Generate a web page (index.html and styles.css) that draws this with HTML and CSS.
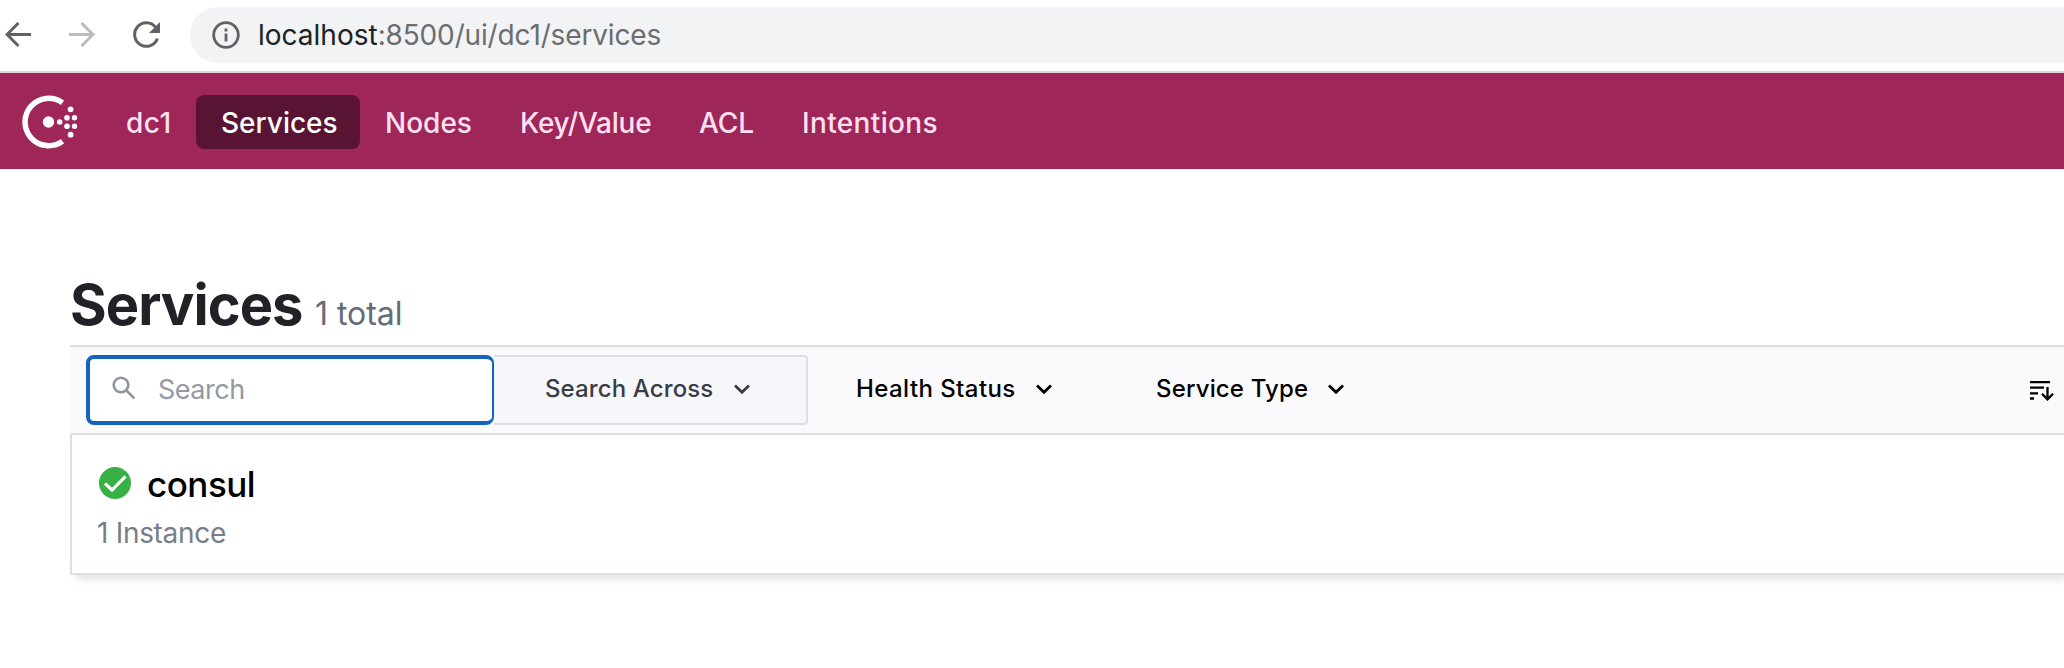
FILE: index.html
```html
<!DOCTYPE html>
<html lang="en">
<head>
<meta charset="utf-8">
<title>Services - Consul</title>
<link rel="stylesheet" href="styles.css">
</head>
<body>
<div class="toolbar">
  <svg class="tool back" viewBox="0 0 26 26"><path d="M26 12.5H2M13.5 1 2 12.5 13.5 24"/></svg>
  <svg class="tool forward" viewBox="0 0 26 26"><path d="M0 12.5h24M12.500 1 24 12.500 12.500 24"/></svg>
  <svg class="reload" viewBox="0 0 28 28"><path class="arc" d="M22.600 6.400A11.700 11.700 0 1 0 24.400 17.400"/><path class="tip" d="M27 1v11H16z"/></svg>
  <div class="address">
    <svg class="info" viewBox="0 0 28 28"><circle cx="14" cy="14" r="12.300"/><path d="M14 12.500v8M14 7.500v3"/></svg>
    <span class="url"><b>localhost</b>:8500/ui/dc1/services</span>
  </div>
</div>
<header class="header">
  <svg class="logo" viewBox="0 0 56 54"><path d="M40.500 7.700A23.700 23.700 0 1 0 40.500 46.300"/><g><circle cx="26.500" cy="27" r="5.700"/><circle cx="37.700" cy="27" r="2.800"/><circle cx="45" cy="22.700" r="2.800"/><circle cx="45" cy="31.300" r="2.800"/><circle cx="52.500" cy="22.700" r="2.700"/><circle cx="52.500" cy="31.300" r="2.700"/><circle cx="48.600" cy="14.300" r="2.900"/><circle cx="48.600" cy="39.700" r="2.900"/></g></svg>
  <nav class="nav">
    <a class="item dc">dc1</a>
    <a class="item active">Services</a>
    <a class="item nodes">Nodes</a>
    <a class="item kv">Key/Value</a>
    <a class="item acl">ACL</a>
    <a class="item intentions">Intentions</a>
  </nav>
</header>
<main class="main">
  <div class="heading"><h1>Services</h1><span class="total">1 total</span></div>
  <div class="filters">
    <div class="search">
      <svg class="glass" viewBox="0 0 24 24"><circle cx="9" cy="9" r="7.300"/><path d="m14.300 14.300 8 8"/></svg>
      <span class="placeholder">Search</span>
    </div>
    <div class="across"><span class="label-across">Search Across</span><svg class="chevron" viewBox="0 0 16 10"><path d="m1 1.500 7 6.800 7-6.800"/></svg></div>
    <div class="menu health"><span class="label-health">Health Status</span><svg class="chevron" viewBox="0 0 16 10"><path d="m1 1.500 7 6.800 7-6.800"/></svg></div>
    <div class="menu type"><span class="label-type">Service Type</span><svg class="chevron" viewBox="0 0 16 10"><path d="m1 1.500 7 6.800 7-6.800"/></svg></div>
    <svg class="sort" viewBox="0 0 24 20"><path d="M0 1.200h20M0 6.700h14M0 12.300h8M0 17.500h4M17.500 6v12.500M12 12.700l5.500 5.700 5.500-5.700"/></svg>
  </div>
  <div class="card">
    <div class="service">
      <svg class="check" viewBox="0 0 32 32"><circle cx="16" cy="16" r="16"/><path d="m6 16.500 7 6.500L26.500 9.300"/></svg>
      <span class="name">consul</span>
    </div>
    <div class="instances">1 Instance</div>
  </div>
</main>
</body>
</html>
```

FILE: styles.css
```css
* { box-sizing: border-box; }
body {
  margin: 0;
  height: 668px;
  overflow: hidden;
  background: #fff;
  font-family: Inter, "Liberation Sans", sans-serif;
  white-space: nowrap;
}
svg { display: block; flex: none; fill: none; stroke: currentColor; }

.toolbar { display: flex; height: 73px; padding-top: 7px; border-bottom: 2px solid #ead3de; color: #5f6368; }
.tool { width: 26px; height: 26px; margin-top: 15px; stroke-width: 3; }
.back { margin-left: 5px; }
.forward { margin-left: 38px; color: #babcbe; }
.reload { width: 28px; height: 28px; margin: 14px 29px 0 38px; }
.arc { stroke-width: 3; }
.tip { fill: currentColor; stroke: none; }
.address { display: flex; flex: 1; height: 56px; padding-left: 22px; border-radius: 28px 0 0 28px; background: #f1f3f4; }
.info { width: 28px; height: 28px; margin-top: 14px; stroke-width: 2.8; }
.url { margin: 0 0 0 18px; font-size: 28px; line-height: 56px; letter-spacing: -.15px; color: #6b6d70; }
.url b { font-weight: 400; letter-spacing: 0; color: #202124; }

.header { display: flex; align-items: center; height: 96px; background: #9e2659; }
.logo { width: 56px; height: 54px; margin: 1px 24px 0 22px; color: #fff; stroke-width: 5.500; }
.logo g { fill: #fff; stroke: none; }
.nav { display: flex; margin-top: 2px; }
.item { height: 54px; padding-left: 25px; border-radius: 8px; font-size: 28px; font-weight: 500; line-height: 57px; color: #ffe0f0; }
.dc { width: 94px; padding-left: 24px; letter-spacing: .5px; }
.active { width: 164px; background: #591434; color: #fff; }
.nodes { width: 135px; }
.kv { width: 180px; letter-spacing: -.25px; }
.acl { width: 102px; padding-left: 24px; }
.intentions { letter-spacing: .35px; }

.main { padding-left: 70px; }
.heading { display: flex; align-items: baseline; height: 176px; padding-top: 102px; }
h1 { width: 245px; margin: 0; font-size: 56px; line-height: 68px; font-weight: 700; letter-spacing: -.95px; color: #202227; }
.total { font-size: 32px; letter-spacing: -.05px; color: #656b77; }
.filters { display: flex; height: 90px; padding: 8px 9px 0 16px; border: solid #dce0e6; border-width: 2px 0; background: #fafafd; }
.search { display: flex; width: 408px; height: 70px; padding-left: 22px; border: 4px solid #1563c0; border-right-width: 2px; border-radius: 8px; background: #fff; color: #8e94a0; }
.glass { width: 24px; height: 24px; margin: 17px 22px 0 0; stroke-width: 2.600; }
.placeholder { font-size: 27px; line-height: 61px; letter-spacing: -.5px; color: #9499a3; }
.across { display: flex; width: 314px; height: 70px; padding-left: 51px; border: 2px solid #dce0e6; border-left: 0; border-radius: 0 4px 4px 0; background: #f6f7fa; color: #3a3c44; }
.across, .menu { font-size: 24px; font-weight: 500; line-height: 64px; }
.menu { display: flex; color: #000; line-height: 68px; }
.label-across { width: 189px; letter-spacing: .12px; }
.label-health { width: 180px; letter-spacing: .42px; }
.label-type { width: 172px; letter-spacing: .15px; }
.chevron { width: 16px; height: 10px; margin-top: 27px; stroke-width: 2.800; }
.menu .chevron { margin-top: 29px; }
.health { width: 300px; margin-left: 48px; }
.sort { width: 24px; height: 20px; margin: 26px 1px 0 auto; stroke-width: 2.300; }
.card { height: 140px; padding: 26px 0 0 25px; border: solid #dce0e6; border-width: 0 0 2px 2px; box-shadow: 4px 6px 8px -2px rgba(0, 0, 0, .12); }
.service { display: flex; height: 50px; }
.check { width: 32px; height: 32px; margin: 6px 16px 0 2px; stroke-width: 3.200; color: #fff; }
.check circle { fill: #37b143; stroke: none; }
.name { font-size: 35px; line-height: 46px; font-weight: 500; letter-spacing: -.5px; color: #000; }
.instances { font-size: 28px; line-height: 44px; letter-spacing: -.3px; color: #777d89; }
```
